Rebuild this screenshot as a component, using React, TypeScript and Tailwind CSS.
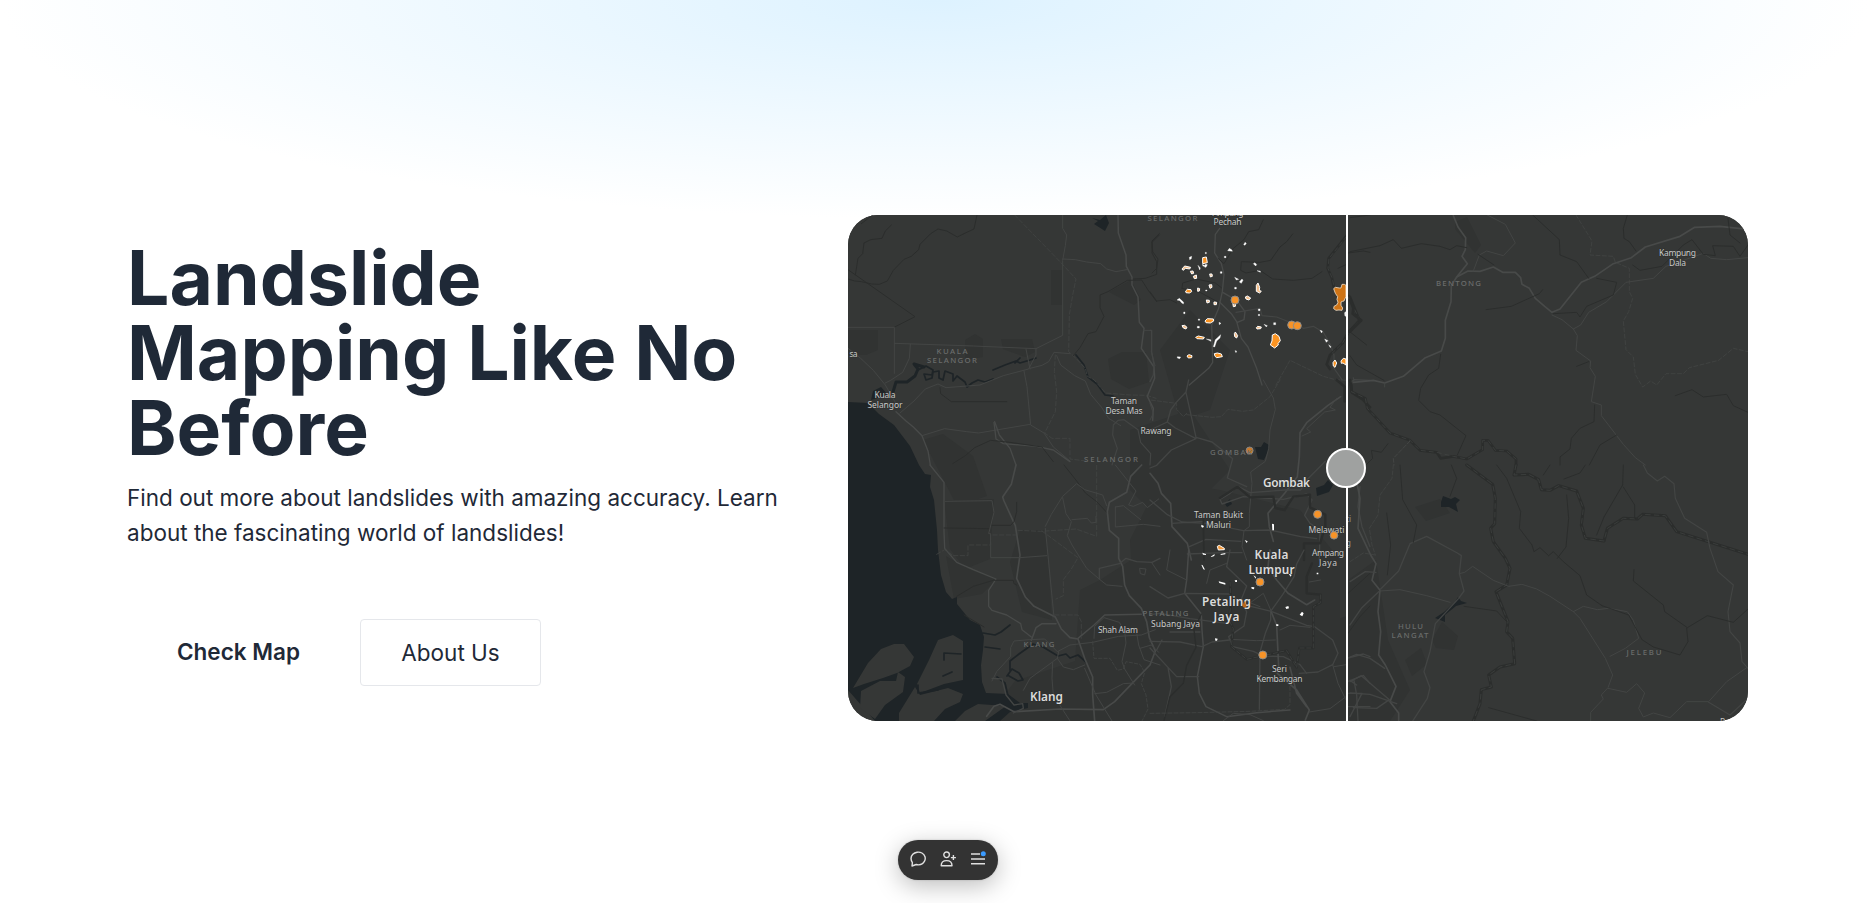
import React from "react";

type Road = { d: string; w?: number; c?: string; dash?: string };

const ROAD = "#434544";
const MAJOR = "#484a49";
const DARK = "#2b2d2c";
const WATER = "#1e2427";

function Tile({ x, y, roads, children }: { x: number; y: number; roads: Road[]; children?: React.ReactNode }) {
  return (
    <g transform={`translate(${x} ${y}) scale(0.33333)`} fill="none" strokeLinejoin="round" strokeLinecap="round">
      {children}
      {roads.map((r, i) => (
        <path key={i} d={r.d} stroke={r.c ?? ROAD} strokeWidth={r.w ?? 3} strokeDasharray={r.dash} />
      ))}
    </g>
  );
}

const northWest: Road[] = [
  { d: "M24 222L44 228L64 230L95 237L118 238L142 228L160 196L192 163L214 154L236 134L240 118L272 86L294 72L320 78L352 96L372 86L402 72L411 30", c: DARK },
  { d: "M46 210L54 160L68 146L72 114L92 104L126 100L136 78L154 60", c: DARK },
  { d: "M24 194L225 335L164 366M98 30L64 56", c: DARK },
  { d: "M24 367H163V505M163 415L400 423L588 431L668 391V166L676 122L680 90L668 70L668 30" },
  { d: "M668 162L706 164L740 171L782 176L800 192L828 200L860 194" },
  { d: "M211 418L208 460L188 502L152 526L136 534" },
  { d: "M24 430L62 460L100 496L136 540L168 596" },
  { d: "M588 431L588 450L566 492L490 512L420 540L318 548L294 537L256 552L222 588L180 624" },
  { d: "M558 432L570 492M552 498L561 545L572 660L612 684L640 726L690 768" },
  { d: "M570 490L606 481L626 470L642 442L690 446" },
  { d: "M300 548L302 566L334 590L500 590", c: DARK },
  { d: "M524 30L660 170L708 222L698 270L688 330L686 440L710 462L736 490L742 514L762 524L796 564L870 570L920 571L948 580", dash: "13 7", w: 2.4 },
  { d: "M646 450L643 500L650 560L646 620L614 684L636 700H690V762L738 768", dash: "13 7", w: 2.4 },
  { d: "M650 452L662 480L704 512L736 528L752 568L784 606L806 640L842 662" },
  { d: "M834 30L835 84L858 150L859 184L876 216L876 240L894 276L898 352L912 370L904 430L942 486L944 520L922 574L940 610L938 646", w: 4.5, c: MAJOR },
  { d: "M910 376H934V440L945 482" },
  { d: "M700 452L720 428L744 386L768 380L792 334L780 308V270L804 260L862 226L905 225L926 258L950 290", c: DARK },
  { d: "M880 222L916 220L950 208V170L936 144V112L958 90", c: DARK },
  { d: "M168 620L198 648L220 666L246 692L264 738L271 780", w: 4, c: MAJOR },
  { d: "M246 692L314 671L380 680L416 684L570 658" },
  { d: "M462 652L468 702L490 716L590 724L640 735L690 770", w: 4, c: MAJOR },
  { d: "M464 650L478 690L510 730L528 780", w: 4, c: MAJOR },
  { d: "M820 660L834 646L852 644L894 674L902 712L932 746L930 780M820 660L818 690L832 730L816 780", w: 3.5 },
  { d: "M338 776L376 752L404 728L452 706L510 712L606 726L640 770", c: DARK },
];

const west: Road[] = [
  { d: "M270 0L312 52V200L314 250L350 292L400 314L468 342L446 376V424L456 436L500 450L542 476L546 494L574 516", w: 4, c: MAJOR },
  { d: "M528 0L514 58L488 96L492 108L526 182L540 270L530 340L556 396L582 424L646 456L664 492L690 518L714 522L734 580L758 636V690L764 768", w: 5, c: MAJOR },
  { d: "M316 109L456 107L462 142L446 206H452V278H540L620 272" },
  { d: "M312 189L446 191M456 181H512L522 170L530 140V112", c: DARK },
  { d: "M290 268L314 254L340 272H384V240H452V210H528M534 196L602 199L708 192L770 214V0", dash: "13 7", w: 2.4 },
  { d: "M606 198L714 278L694 312L670 344V392L648 402M644 450H714L724 470V520", dash: "13 7", w: 2.4 },
  { d: "M616 190L642 456" },
  { d: "M672 0L710 48L736 84L770 110L802 144", c: DARK },
  { d: "M616 184L634 148L668 94L710 56L734 74L788 90L800 122" },
  { d: "M668 98L678 146L694 170L682 212L696 240L740 310L780 344L800 360L846 364M696 164L742 160L754 174L768 172V154" },
  { d: "M905 0L872 34L860 82L808 112L802 140L808 196L836 220V280L848 304L854 360L868 392L904 430L920 470L928 518L946 558L930 600L870 662L824 710L790 734L660 732L522 740L480 718L462 724L440 754", w: 5, c: MAJOR },
  { d: "M778 342V310L838 296L858 280L890 290L936 292L960 280", w: 4 },
  { d: "M936 294L960 330M900 310L918 312L914 330L902 326Z" },
  { d: "M904 448L794 450L762 480L714 520M574 526L588 488L606 476H648", w: 4.5, c: MAJOR },
  { d: "M456 648L470 620L512 574V548L522 528L568 524L614 522L652 560L690 540L758 532L836 514L904 510L946 494" },
  { d: "M762 520L764 484L792 458L838 472L854 500L858 534L846 590L854 612L884 660" },
  { d: "M656 560L652 580L638 590L636 640L640 690L690 768M636 592L570 640L550 676" },
  { d: "M652 580L670 606L700 614L734 600M734 610L768 690L816 768M764 686L800 682L850 656L880 654" },
  { d: "M758 530L762 580L810 580L832 616L850 612L858 590L900 598L914 622L904 656L918 690L924 732L906 768", dash: "10 6", w: 2.4 },
  { d: "M456 640L486 642L498 690L522 720L548 716L550 730L520 744", w: 4 },
  { d: "M350 394L400 364L460 346H520L522 356L530 360M372 450L432 486", c: DARK },
  { d: "M826 0L864 48L888 78L866 120L880 124L908 112L922 128L956 102M826 126V186L910 178L960 184M826 126L850 122L902 164" },
  { d: "M888 492L896 540L912 584L960 600M900 550L934 540L956 562" },
];

const north: Road[] = [
  { d: "M209 70L196 88L194 144L214 176L222 208L217 260L206 310L185 360L188 472L176 490L118 540", w: 4, c: MAJOR },
  { d: "M218 262L260 286L285 320L282 344L262 352M208 290L244 326L260 350L274 400L294 426L320 490L336 540", w: 4, c: MAJOR },
  { d: "M258 322L330 310L336 332L380 336L420 352L460 370L490 364L520 382L542 420L552 450V490L576 524", w: 3.5 },
  { d: "M204 160L222 176L250 130L282 104L296 80L326 74L340 44", c: DARK },
  { d: "M428 87L410 110L390 126L362 166L330 172L274 170L272 196L288 204L330 196L368 222L430 226L486 220L516 200", c: DARK },
  { d: "M28 86L6 108L8 140L24 162L20 190L6 204M0 260L20 288L60 284L80 294M96 250L98 234L138 222L196 234L214 248M96 250L124 256L150 262L206 292", c: DARK },
  { d: "M590 92L536 160L533 190L546 220L552 250L600 276L628 346L594 384L578 414L540 450L530 478L540 492", w: 8, c: DARK },
  { d: "M590 94L537 160L534 190L547 220L553 250M594 275L630 346L596 382L578 414L541 450", dash: "12 10", w: 2 },
  { d: "M378 540L420 466L520 514L556 524L588 526", dash: "12 6", w: 2.4 },
  { d: "M564 190L590 178M594 144L640 138L660 142M594 376L650 420", c: DARK },
  { d: "M0 376H5V440L12 480L10 510L0 530M598 534L614 524L660 526", w: 4 },
];

const center: Road[] = [
  { d: "M110 100L100 110L80 88L80 70L0 60M110 104L186 112L214 110L234 88L278 94L310 90L360 50L390 0", dash: "12 6", w: 2.4 },
  { d: "M116 0L108 36L78 68L62 90L52 126L76 144L138 176L64 210L20 256L0 264M52 126L0 150M108 38L138 172L186 186L214 208L248 236L232 294L290 320", w: 4 },
  { d: "M0 70L10 100L0 120M340 0L370 54L376 88L360 150L356 206L346 244L302 276L306 310L298 400V440L282 452L276 500L290 540" },
  { d: "M572 50L534 76L470 128L450 158L448 230L442 290L404 340L370 380L354 400L358 440L370 484", w: 5, c: MAJOR },
  { d: "M560 55L540 82L556 90L524 96L470 146L482 156L456 168", w: 3 },
  { d: "M526 244L474 296L452 330H404L300 338L262 318L240 340L210 358L216 372L280 350L400 358L470 342L486 360L464 406L480 430L510 450L508 540", w: 4 },
  { d: "M210 354L262 320L300 352L370 350L376 384L404 390L430 350L480 344L480 382L526 404V440L510 490H462V540", c: DARK, w: 7 },
  { d: "M0 280L24 310L34 340L62 370L66 440L112 490L124 540", w: 5, c: MAJOR },
  { d: "M0 360L52 404L96 426L170 430L280 452L360 450L452 470L500 476M66 430L160 424M118 500L168 478L272 484M112 522L220 518L276 518", w: 4 },
  { d: "M160 420L162 540", c: DARK, w: 5 },
  { d: "M560 0L584 20V64M600 0L606 38L640 60L660 82", c: DARK, w: 8 },
  { d: "M630 320L624 380L636 440L660 500", w: 4 },
];

const south: Road[] = [
  { d: "M116 0L110 90L104 130L154 192L156 240L160 290L142 380L148 430L168 470L230 500L320 488L420 480", w: 4.5, c: MAJOR },
  { d: "M0 110L54 144L104 130L236 132L290 166L364 184L470 226L494 230L548 270L564 310L548 344L504 366L448 370", w: 4 },
  { d: "M240 0L230 50L290 108L274 148L290 186L282 228L236 260L248 290L310 304L340 318L400 320L450 344L470 370", w: 4 },
  { d: "M462 0L440 42L432 80L398 134L362 184V210L346 250L330 306L328 478", w: 4 },
  { d: "M360 0L354 50L380 90L414 130L470 164L494 150M364 186L380 226L386 350", w: 5, c: MAJOR },
  { d: "M382 370L440 420L478 480L466 510M420 352L440 430L470 470", w: 5, c: MAJOR },
  { d: "M478 96L512 90M390 240L420 226L480 232M240 268L320 272L376 270" },
  { d: "M0 274L90 276L156 290L186 276L238 270M0 294L54 352L64 410L44 500M54 352L80 380H146M20 300L36 270M0 194L30 190L120 206L230 220M60 246L150 246", w: 4 },
  { d: "M154 192L132 240L138 292L110 346L100 400L60 440L42 512", c: DARK, w: 4 },
  { d: "M240 96L244 160L236 208L250 236L244 290L290 328L390 306L410 302L440 352L448 294H490V170L512 158V134L470 130V80L486 40", c: DARK, w: 7 },
  { d: "M240 96L244 160L236 208L250 236L244 290L290 328L390 306L410 302L440 352L448 294H490V170L512 158V134", dash: "12 8", w: 2 },
  { d: "M0 490L140 488L300 484L404 478L420 464V390", dash: "12 6", w: 2.4 },
  { d: "M548 344L564 400L588 450M552 350L588 344M478 486L540 476L588 440M220 512L250 490L300 494L340 512" },
  { d: "M594 324L640 312L660 320M594 394L640 376L660 400M594 470L660 470M600 500L636 430L594 430", w: 4 },
  { d: "M594 250L630 200L660 168M594 130L660 70", c: DARK },
  { d: "M170 100L180 60L230 40M290 166L340 130L364 184M274 148L330 170M60 0L50 60L110 90" },
];

const northEast: Road[] = [
  { d: "M310 32L324 66L347 98L346 134L336 154L352 176L320 216L304 242L303 290L286 346V400L274 438L226 458L160 514L104 534L70 526L10 532", w: 5, c: MAJOR },
  { d: "M320 216L354 198L390 199L430 186L458 202L496 202L512 218L516 238L538 250L556 280L584 304L606 322L630 312L694 232L734 214L790 176L844 158L886 126L990 94L1034 67L1110 64L1194 73", w: 5, c: MAJOR },
  { d: "M370 198L388 150L410 138L460 152L496 114L466 58L412 30M606 330L636 344L670 372L682 392L678 436L722 468L720 488L736 514L724 590L754 600L754 632L820 718L856 758L886 780" },
  { d: "M670 372L692 360L716 322L770 290L828 232L910 220L948 184L1060 145L1082 160L1130 164L1194 158" },
  { d: "M0 140L90 122L130 104L154 130L214 116L270 124L300 134L320 122L350 128M384 148L432 180M408 314L484 304L568 266L578 254M548 30L600 78L628 104L630 150L680 170L716 220", c: DARK },
  { d: "M678 30L726 108L720 150L790 154L796 172L838 190V260L848 280L836 320L820 348L828 434L850 456L856 508L878 546L902 528L920 540L948 506H1000L1018 488L1106 466L1150 430L1194 440", dash: "12 7", w: 2.4 },
  { d: "M832 30L820 70L822 100L838 110L858 138M848 180L870 196L936 184L960 160L1000 120L1026 104L1060 148L1096 152L1088 122L1150 124L1170 154L1194 120M1134 40L1140 90L1170 114", c: DARK },
  { d: "M610 326L680 322L690 336L710 304L790 270L800 232L740 220M680 484L716 470", c: DARK },
  { d: "M976 572L1026 554L1060 576L1130 568L1150 602L1194 622M272 448L266 490L236 510L212 550L206 586L240 620L270 630L348 692L322 750", c: DARK },
  { d: "M0 452L20 480L102 526M734 600L732 650L690 670L664 700L660 732L630 756V780M800 690L750 720L718 780", c: DARK },
  { d: "M0 284L10 310L8 326L34 346L0 380M4 540V560L46 580L52 610L120 684L180 706L210 736L260 742L272 760L310 754L350 762L398 734V706H414L436 736L470 738L498 762L498 780", c: DARK, w: 8 },
  { d: "M4 560L46 580L52 610L120 684L180 706L210 736L260 742L310 754L350 762L398 734V706H414L436 736L470 738L498 762", dash: "12 12", w: 2 },
  { d: "M180 708L130 760L132 780M10 518L12 532M104 534V550", dash: "12 6" },
  { d: "M114 716L94 742L64 736L68 760L48 780M60 30L30 34L0 38", c: DARK },
];

const southEast: Road[] = [
  { d: "M350 0L428 58L436 100L434 176L422 190L430 230L466 280L480 310L470 360L438 380L474 470L470 500L488 520L494 596L450 606L416 630L424 666L394 674L390 716L370 768M498 0L492 30L536 28L566 44L574 74L600 76L626 62L680 78L700 130L694 180L706 220L762 228L772 190L820 160L862 162L878 148L946 152L980 200L1194 268", c: DARK, w: 9 },
  { d: "M350 0L428 58L436 100L434 176L422 190L430 230L466 280L480 310L470 360L438 380L474 470L470 500L488 520L494 596L450 606L416 630L424 666L394 674L390 716L370 768M498 0L492 30L536 28L566 44L574 74L600 76L626 62L680 78L700 130L694 180L706 220L762 228L772 190L820 160L862 162L878 148L946 152L980 200L1194 268", dash: "14 12", w: 2 },
  { d: "M22 60L30 100L24 190L62 270L78 296L66 346L90 376L84 440L92 500L86 570L106 600L138 664L120 710L146 744V768", w: 5, c: MAJOR },
  { d: "M92 372L146 318L180 236L230 214L322 264L334 272L328 326L342 378L326 400L256 476L240 560L222 620L240 668L232 700L188 768", w: 4 },
  { d: "M328 326L344 322L368 304L430 346L476 364L516 358L560 372L600 394L670 440L690 460L766 580L788 630L774 668L754 690L760 702L722 742V768M90 378L150 374L230 392L300 412" },
  { d: "M670 440L700 424L742 434L776 430L832 440L850 466L866 520L826 550L780 574M774 670L830 682L860 656L884 684L866 730L880 756L910 744L960 758L1010 710L1076 710L1130 650L1190 608" },
  { d: "M880 0L892 24L922 48L944 34L972 56L976 100L1004 160L1070 202L1080 250L1104 320L1150 360L1134 440L1140 500L1170 534L1176 590L1194 610M1076 712L1140 750L1194 700", w: 3.5 },
  { d: "M440 0L470 40L512 140L508 190L546 240L552 260L570 248L596 272L610 260L640 290L690 332L710 390L756 422M756 422L836 450L876 524L910 546L990 570L1014 530L1010 490M852 314L850 348L940 420L944 440L1012 488L1072 452L1150 472L1194 432", c: DARK },
  { d: "M820 0L818 60L762 156L740 210M820 66L854 120V160M650 90L656 160L648 246L622 280M600 0L580 30M706 0L690 24L642 42M304 0L320 40L300 94M150 0L158 104L200 180L190 232M110 144L122 240L112 330M342 424L440 438L470 470M416 728L560 768", c: DARK },
  { d: "M130 0L126 40L90 90L84 150L58 190L66 240L76 270M0 290L40 264L76 270", dash: "12 6", w: 2.4 },
  { d: "M0 350L46 320L78 322M0 480L34 430L86 380M0 576L20 568L60 580L104 610M0 650L34 632L118 704L80 730L10 728M0 684L60 688L140 716M12 646L20 690L24 768M0 646L20 660", w: 4 },
];

type Label = { t: string; x: number; y: number; w: number; kind?: "district" | "city" };
const labels: Label[] = [
  { t: "KUALA", x: 952, y: 353.5, w: 31, kind: "district" },
  { t: "SELANGOR", x: 952, y: 362.8, w: 50, kind: "district" },
  { t: "sa", x: 853.5, y: 356.5, w: 8 },
  { t: "Kuala", x: 885, y: 397.7, w: 21 },
  { t: "Selangor", x: 885, y: 407.7, w: 35 },
  { t: "Taman", x: 1124, y: 404.2, w: 26 },
  { t: "Desa Mas", x: 1124, y: 414, w: 37 },
  { t: "Rawang", x: 1156, y: 434, w: 31 },
  { t: "SELANGOR", x: 1111, y: 462.2, w: 54, kind: "district" },
  { t: "SELANGOR", x: 1172.5, y: 221.2, w: 50, kind: "district" },
  { t: "Ampung", x: 1228, y: 215.5, w: 31 },
  { t: "Pechah", x: 1227.5, y: 225.2, w: 28 },
  { t: "GOMBAK", x: 1231, y: 455, w: 42, kind: "district" },
  { t: "Gombak", x: 1286.5, y: 487, w: 47, kind: "city" },
  { t: "Taman Bukit", x: 1218.5, y: 518, w: 49 },
  { t: "Maluri", x: 1218.5, y: 527.8, w: 25 },
  { t: "Melawati", x: 1326.5, y: 532.7, w: 36 },
  { t: "Kuala", x: 1271.5, y: 558.5, w: 34, kind: "city" },
  { t: "Lumpur", x: 1271.5, y: 574, w: 46, kind: "city" },
  { t: "Ampang", x: 1328, y: 556, w: 32 },
  { t: "Jaya", x: 1328, y: 565.7, w: 18 },
  { t: "Petaling", x: 1226.5, y: 606, w: 49, kind: "city" },
  { t: "Jaya", x: 1226.5, y: 620.7, w: 26, kind: "city" },
  { t: "PETALING", x: 1165.5, y: 615.5, w: 46, kind: "district" },
  { t: "Subang Jaya", x: 1175.5, y: 627.2, w: 49 },
  { t: "Shah Alam", x: 1118, y: 633.3, w: 40 },
  { t: "KLANG", x: 1039, y: 646.7, w: 31, kind: "district" },
  { t: "Klang", x: 1046.5, y: 700.7, w: 33, kind: "city" },
  { t: "Seri", x: 1279.5, y: 672.2, w: 15 },
  { t: "Kembangan", x: 1279.5, y: 681.8, w: 46 },
  { t: "BENTONG", x: 1458.5, y: 285.7, w: 45, kind: "district" },
  { t: "Kampung", x: 1677.5, y: 256, w: 37 },
  { t: "Dala", x: 1677.5, y: 265.7, w: 17 },
  { t: "HULU", x: 1410.5, y: 628.8, w: 25, kind: "district" },
  { t: "LANGAT", x: 1410, y: 638.3, w: 37, kind: "district" },
  { t: "JELEBU", x: 1644, y: 655.3, w: 35, kind: "district" },
];

const points: [number, number, number][] = [
  [1235, 300, 4], [1291.7, 325, 4], [1297.3, 325.7, 4], [1317.6, 514.3, 4],
  [1334, 535.3, 3.8], [1260, 582, 4], [1262.8, 655, 4],
];

const whiteMarks =
  "M233 137l5-7 8 5 1 4zM281 119l4-7 4 3-4 6zM118 157l7-3-1 7-5 3zM166 142h3v4h-3zM223 154h5v4h-5zM144 181l7 8-2 6zM157 178l8 4-6 2zM163 186l3-8 6 1-4 8zM211 200h5v5h-5zM254 217l12 6-7 2zM268 231l8-9 3 4-5 9zM254 247h5v5h-5zM310 176l5-3 5 6-3 4zM321 197l10 1v4zM81 285l7-5 13 12-1 5-7-5-3-5zM167 255h4v3h-4zM101 321h4v5h-4zM145 342h4v4h-4zM142 364h6v5h-6zM207 352l6 3-5 4zM325 312h5v5h-5zM325 328h4v4h-4zM342 358l10 4-3 4zM371 353h6v6h-6zM169 402l13 2 1 5zM212 389l-2 10-10 9-6 18-4-1 6-21zM82 455l10 1-3 5-7-2zM255 437l5 1-2 5zM510 376l7 2-2 6zM524 402l10 5-5 5zM536 419l7 6-2 3z";

const warmMarks =
  "M96 192l8-9 18 4-3 5-12-2-8 6zM121 199l8-1 2 7-6 2zM130 214l9-4 1 10-7 1zM179 207h7l1 7-6 2zM177 240l8-1 1 8-6 3zM143 249l6 2-1 7-5 1zM169 285l9 1v6l-7 2zM192 291l8 1-1 7h-7zM96 362l8-1 7 6-3 5-8-3zM319 368l4-4 11 2-2 5-11 1zM286 276l6-3 10 6-5 6-9-3zM248 292h10l-2 12-6 1zM253 386l3-5 7 11-3 7-6-4zM319 241l5-7 5 13-1 9 6 3-5 5-10-5z";

const orangeMarks =
  "M158 158l11-2 3 17-14 3zM107 258l5-5 11 1 2 6-7 4-10-1zM165 348l7-7 18 1 1 6-10 6-13-1zM137 397l8-4 18 4-3 5-19-1zM193 446l9-2 12 3 3 8-17 3-5-4zM111 453l6-4 9 3-1 6-10 1zM367 390l9-4 11 8 4 13-7 9 1 4-11 9-13-9 5-12zM549 473l6-8 5 9-5 13-5-4zM573 468l7-8 8 2v18l-9-6-5 1z";

export default function App() {
  return (
    <main className="flex h-[903px] flex-col overflow-hidden bg-white bg-[radial-gradient(ellipse_935px_219px_at_top,#ddf2ff_0%,#ffffff_100%)] font-[Inter,sans-serif] text-[#1f2937]">
      <div className="flex h-[840px] shrink-0 items-start pt-[215px] pl-[127px]">
        <section className="w-[721px] shrink-0 pt-[25px]">
          <h1 className="w-[650px] text-[75px] leading-none font-bold">
            Landslide
            <br />
            Mapping Like No
            <br />
            Before
          </h1>
          <p className="mt-[15px] w-[670px] text-[22.5px] leading-[35px]">
            Find out more about landslides with amazing accuracy. Learn
            <br />
            about the fascinating world of landslides!
          </p>
          <div className="mt-[69px] flex h-[67px] text-[22.5px]">
            <button className="mr-[10px] w-[223px] pb-[2px] font-semibold">Check Map</button>
            <button className="w-[181px] rounded-[4px] border border-gray-200">About Us</button>
          </div>
        </section>
        <section className="h-[506px] w-[900px] shrink-0 overflow-hidden rounded-[30px] bg-[#353736]">
          <svg viewBox="848 215 900 506" className="block h-[506px] w-[900px]" fontFamily="'Noto Sans', sans-serif">
            <rect x="848" y="215" width="900" height="506" fill="#353736" />
            {/* built-up and forest areas */}
            <g fill="#313332">
              <path d="M1051 270h12v35h-12zM848 330h30v20l-12 5h-18zM965 340l10-6 8 5v18l-18 3zM1001 339h31l3 13-10 5-22-8zM1109 292l22-12 10 20-7 5zM1108 359l14-7h24l3 30-20 7-18-10zM944 500l50-1-4 60-25 10-15-20zM1020 530h26l6 90-30-8-12-50zM946 556l20 12 30 12-14 14-28 5zM1080 590l20-10 70-45 40 20 20 60 60 20 60-20-5 106h-360l30-40 60-20zM1130 540l30-60 60 10 80 20 40 50v161h-200zM1160 350l30-40 40 40-20 60-30 10zM1130 430l60-20 40 60-60 60-40-40zM1432 640l10-18 16 14-4 14-18-2zM1348 580l28-20 12 80 22 50-20 31h-42zM1405 660l16-12 6 16-15 12zM1455 222l12-5 14 28-6 8-20-24zM1415 507l25-8 10 14-24 8zM923 440l20-6 30 22 14 40-30 10z" />
            </g>
            {/* strait and delta */}
            <g fill={WATER}>
              <path d="M848 402L868 403L879 414L894 425L910 446L919 465L925 474L931 475L930 487L934 500L937 530L938 550L941 575L946 592L952 599L957 597L957 604L970 620L980 625L984 637L983 650L981 665L982 682L986 693L1008 694L1020 703L1028 703V708L1010 712L1000 721H875L848 690Z" />
              <path d="M1092 218l8 2 6-5 3 8-4 8-11-7 4-3zM1255 447l6 0 3-5 5 3-1 6-4 9-6-1zM1316 488l8-3 4-5 5 5-4 7-12 4zM1225 504l5-5 2 5-5 3zM1441 502l2-6 8 3 4-2 5 3-4 4 2 8-9-5-8 0zM1435 618l9-6 11-10 3-5 3 4 6 2-11 3-11 9 0 7zM871 400l2-9 8-4 7 8z" />
            </g>
            <g fill="#353736">
              <path d="M853 688L868 663L881 649L894 644L904 644L914 657L910 666L897 673L883 678L864 684ZM861 691L880 681L896 681L898 672L905 677L903 692L885 705L875 719L860 708ZM917 684L929 660L938 640L953 635L963 641V680L944 684L920 693ZM915 687L920 695L948 688L963 694L960 702L945 709L934 721H899L899 713ZM965 711L978 704L1006 706L985 721H955Z" />
            </g>
            <g fill="none" stroke={WATER} strokeLinecap="round" strokeLinejoin="round">
              <path strokeWidth="3" d="M893 392L896 382L907 382L915 376L918 369L914 364L924 367" />
              <path strokeWidth="1.7" d="M918 370l8-4 7 4-1 5-8-1 2 6 6-2 1-6 6-1v7l4 2 2-9 8 3v7l4-5 8 6 2 5 5-4 6-3 7 2 8-3M993 370l12-5 11-4 4 2 10-3 6-2M1020 358l-5 5M1076 355l8 10 4 12 9 7 8 11 8 1M983 633l12 2 6-3 9-7M985 647l15 2M1007 676l5-7 7 4 4 7-5 1-9-5M1010 670v-9l9-7 14-10 10 3 15 9 8-2 4 4 8-3 8 7M997 677l8 6 3 13 7 11M944 660v-7l17 1M943 676l9-4M918 685v8l20-3" />
            </g>
            <Tile x={840} y={205} roads={northWest} />
            <Tile x={840} y={465} roads={west} />
            <Tile x={1150} y={205} roads={north} />
            <Tile x={1150} y={380} roads={center} />
            <Tile x={1150} y={550} roads={south} />
            <Tile x={1350} y={205} roads={northEast} />
            <Tile x={1350} y={465} roads={southEast} />
            <circle cx="1249.6" cy="450.5" r="3.5" fill="#c8782a" stroke="#858685" />
            {labels.map((l, i) => {
              const district = l.kind === "district";
              const city = l.kind === "city";
              return (
                <text
                  key={i}
                  x={l.x - l.w / 2}
                  y={l.y}
                  textLength={l.w}
                  fontSize={city ? 11.8 : district ? 7.8 : 8.5}
                  fontWeight={city ? 600 : district ? 500 : 400}
                  fill={city ? "#dcdcdb" : district ? "#6a6c6b" : "#cacbca"}
                  stroke={district ? "none" : "#2c2e2d"}
                  strokeWidth={0.8}
                  paintOrder="stroke"
                >
                  {l.t}
                </text>
              );
            })}
            {/* landslide footprints */}
            <g transform="translate(1150 205) scale(0.33333)">
              <path d={whiteMarks} fill="#fff" stroke="#fff" strokeWidth="1" />
              <path d={warmMarks} fill="#f3bf8c" stroke="#fff" strokeWidth="3" />
              <path d={orangeMarks} fill="#fb9422" stroke="#fff" strokeWidth="3" />
              <path d="M551 251l5-4 12 2 5 0 3-11 7 0 5 3v33l-6 14-4 1-5 2v10l5 8-2 7-9-1-9 1-7-5 1-7 8-4 4-8-3-9 2-8-7-10z" fill="#cf7416" stroke="#eedcc5" strokeWidth="2.5" />
              <path d="M583 323l5-4v16l-4-3z" fill="#eee" />
            </g>
            <g transform="translate(1150 380) scale(0.33333)" fill="#fff">
              <path d="M366 431l6 2v18h-5zM154 434l8 4-3 5-5-2zM284 480l9 4-3 5zM157 518l11 4v3l-9-1zM182 530l12-8-1 6-9 3zM212 522l14-3v4l-14 2z" />
              <path d="M202 499l6-3 15 9v4l-18 1z" fill="#f39a3c" stroke="#fff" strokeWidth="3" />
            </g>
            <g transform="translate(1150 550) scale(0.33333)" fill="#fff">
              <path d="M154 44l4 2 7 13-5-1zM206 94l20 5v5l-18-5zM254 91l7-1v6h-5zM304 111l9 1-1 6-7-2zM310 76l8 5-1 5zM406 171l9-3 2 7-8 2zM449 194l7-9 5 5-4 9zM378 223h7v5h-6zM195 265l8 1-2 6h-5zM500 68h5v5h-5zM416 71l9 3-3 6z" />
              <path d="M277 168l7-16 6 18-8 3z" fill="#bb6618" />
            </g>
            <g fill="#f79328" stroke="#8c8c8b" strokeWidth="1">
              {points.map(([x, y, r], i) => (
                <circle key={i} cx={x} cy={y} r={r} />
              ))}
            </g>
            <text x="1346" y="522" fontSize="8" fill="#9c9d9c">ti</text>
            <text x="1346" y="546" fontSize="8" fill="#9c9d9c">g</text>
            <text x="1720" y="724.5" fontSize="8.3" fill="#c8c8c8">R</text>
            {/* comparison divider */}
            <rect x="1346" y="215" width="2" height="506" fill="#fff" />
            <circle cx="1346" cy="468" r="19" fill="#9fa1a0" stroke="#fff" strokeWidth="2" />
          </svg>
        </section>
      </div>
      <div className="flex justify-center pl-[25px]">
        <div className="flex h-10 w-[100px] shrink-0 items-center justify-between rounded-full bg-[#333] px-[12px] pb-[2px] shadow-[0_6px_24px_rgba(0,0,0,0.26),0_0_2px_rgba(0,0,0,0.2)]">
          <svg viewBox="0 0 16 16" className="size-4" fill="none" stroke="#e0e0e0" strokeWidth="1.4" strokeLinejoin="round">
            <path d="M2 15L2.4 11.6C.4 8.4 1 5.200 2.800 3.300C5 1 9 .4 11.900 2C15.200 3.800 16 7.400 14.500 10.200C12.900 13.200 9.400 14.300 6.200 13.500Z" />
          </svg>
          <svg viewBox="0 0 16 16" className="size-4" fill="none" stroke="#e0e0e0" strokeWidth="1.4" strokeLinejoin="round">
            <circle cx="6.600" cy="3.800" r="2.800" />
            <path d="M1.200 14.700C1.200 11.200 3.200 9.600 6.600 9.600S12 11.200 12 14.700ZM13.400 4.100v5M10.900 6.600h5" />
          </svg>
          <svg viewBox="0 0 16 16" className="size-4" fill="none" stroke="#e0e0e0" strokeWidth="1.4">
            <path d="M1 3h9M1 8h14M1 12.700h14" />
            <circle cx="13.300" cy="2.700" r="2.500" fill="#3b9bff" stroke="none" />
          </svg>
        </div>
      </div>
    </main>
  );
}
